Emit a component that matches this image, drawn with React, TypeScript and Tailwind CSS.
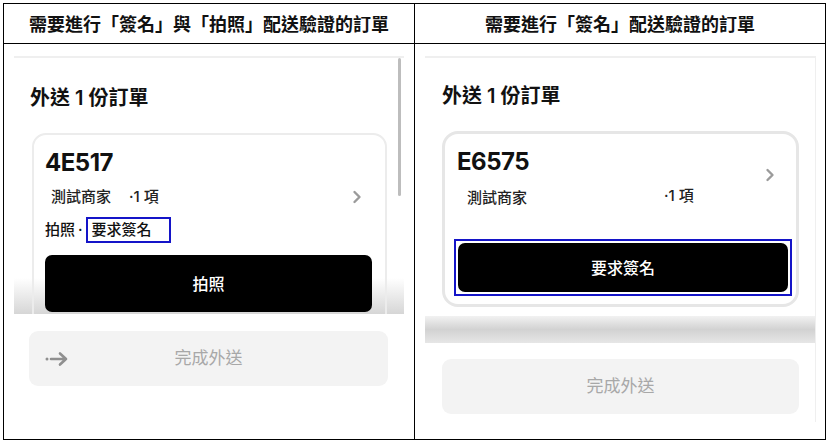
import React from 'react';

const cjk = { fontFamily: '"Noto Sans CJK TC", "Noto Sans CJK SC", sans-serif' };
const app = { fontFamily: 'Inter, "Noto Sans CJK TC", sans-serif' };

function Chevron() {
  return (
    <svg width="10" height="14" viewBox="0 0 10 14" className="shrink-0">
      <path d="M2.5 2 L7.5 7 L2.5 12" fill="none" stroke="#9b9b9b" strokeWidth="2.4" strokeLinecap="round" strokeLinejoin="round" />
    </svg>
  );
}

function DotArrow() {
  return (
    <svg width="24" height="16" viewBox="0 0 24 16">
      <circle cx="2" cy="8" r="1.5" fill="#8f8f8f" />
      <path d="M6 8 H21 M15 2.5 L21 8 L15 13.5" fill="none" stroke="#8f8f8f" strokeWidth="2.6" strokeLinecap="round" strokeLinejoin="round" />
    </svg>
  );
}

function LeftShot() {
  return (
    <div className="w-[390px] h-[338px] border-t-2 border-[#efefef] flex flex-col" style={app}>
      <div className="relative h-[256px] overflow-hidden pl-[16px]">
        <div className="absolute left-0 right-0 bottom-0 h-[36px] bg-gradient-to-b from-transparent to-[#d6d6d6]" />
        <div className="relative pt-[27px] text-[20px] font-semibold text-[#111] leading-[26px]">外送 1 份訂單</div>
        <div className="relative mt-[22px] ml-[2px] w-[355px] h-[220px] rounded-[14px] border-2 border-[#ececec] px-[11px] pt-[12px]">
          <div className="text-[24px] font-bold leading-[32px] text-[#111] tracking-[-0.5px]">4E517</div>
          <div className="flex items-center h-[32px] mt-[2px] pl-[6px] pr-[12px] text-[15px] font-medium text-[#222]">
            <span>測試商家</span>
            <span className="ml-[18px]">·1 項</span>
            <span className="flex-1" />
            <Chevron />
          </div>
          <div className="flex items-center h-[30px] mt-[2px] text-[15px] font-medium text-[#111]">
            <span>拍照</span>
            <span className="mx-[3px]">·</span>
            <span className="border-2 border-[#1414c8] px-[4px] h-[26px] w-[85px] flex items-center">要求簽名</span>
          </div>
          <div className="mt-[10px] w-[327px] h-[57px] rounded-[7px] bg-black text-white text-[16px] font-medium flex items-center justify-center">拍照</div>
        </div>
        <div className="absolute right-[3px] top-0 w-[3px] h-[138px] bg-[#bdbdbd] rounded-full" />
      </div>
      <div className="flex-1 bg-white pt-[17px] pl-[15px]">
        <div className="w-[359px] h-[55px] rounded-[9px] bg-[#f3f3f3] flex items-center pl-[16px] pr-[16px]">
          <DotArrow />
          <span className="flex-1 text-center text-[17px] text-[#a8a8a8] pr-[24px]">完成外送</span>
        </div>
      </div>
    </div>
  );
}

function RightShot() {
  return (
    <div className="w-[391px] h-[366px] border-t-2 border-r border-[#efefef] flex flex-col" style={app}>
      <div className="h-[258px] pl-[17px] bg-white">
        <div className="pt-[25px] text-[20px] font-semibold text-[#111] leading-[26px]">外送 1 份訂單</div>
        <div className="mt-[22px] w-[357px] h-[176px] rounded-[16px] border-[3px] border-[#e6e6e6] bg-white px-[9px] pt-[12px]">
          <div className="pl-[3px] text-[24px] font-bold leading-[32px] text-[#111] tracking-[-0.5px]">E6575</div>
          <div className="relative h-[40px] text-[15px] font-medium text-[#222]">
            <span className="absolute left-[13px] top-[9px]">測試商家</span>
            <span className="absolute left-[210px] top-[7px]">·1 項</span>
            <span className="absolute right-[12px] top-[-10px]"><Chevron /></span>
          </div>
          <div className="mt-[21px] w-[338px] h-[57px] border-2 border-[#1414c8] p-[2px]">
            <div className="w-full h-full rounded-[7px] bg-black text-white text-[16px] font-medium flex items-center justify-center">要求簽名</div>
          </div>
        </div>
      </div>
      <div className="h-[27px] bg-gradient-to-b from-[#f2f2f2] via-[#d2d2d2] to-[#e6e6e6]" />
      <div className="flex-1 bg-white pt-[16px] pl-[17px]">
        <div className="w-[357px] h-[55px] rounded-[9px] bg-[#f3f3f3] flex items-center justify-center text-[17px] text-[#a8a8a8]">完成外送</div>
      </div>
    </div>
  );
}

export default function App() {
  return (
    <div className="w-[831px] h-[443px] bg-white p-[3px]">
      <div className="w-[823px] h-[437px] border-[1.5px] border-black grid grid-cols-[411px_1fr] grid-rows-[40px_1fr]">
        <div className="border-r-[1.5px] border-b-[1.5px] border-black flex items-center justify-center text-[18px] font-bold text-[#111]" style={cjk}>
          需要進行「簽名」與「拍照」配送驗證的訂單
        </div>
        <div className="border-b-[1.5px] border-black flex items-center justify-center text-[18px] font-bold text-[#111]" style={cjk}>
          需要進行「簽名」配送驗證的訂單
        </div>
        <div className="border-r-[1.5px] border-black pt-[12px] pl-[10px]">
          <LeftShot />
        </div>
        <div className="pt-[12px] pl-[10px]">
          <RightShot />
        </div>
      </div>
    </div>
  );
}
